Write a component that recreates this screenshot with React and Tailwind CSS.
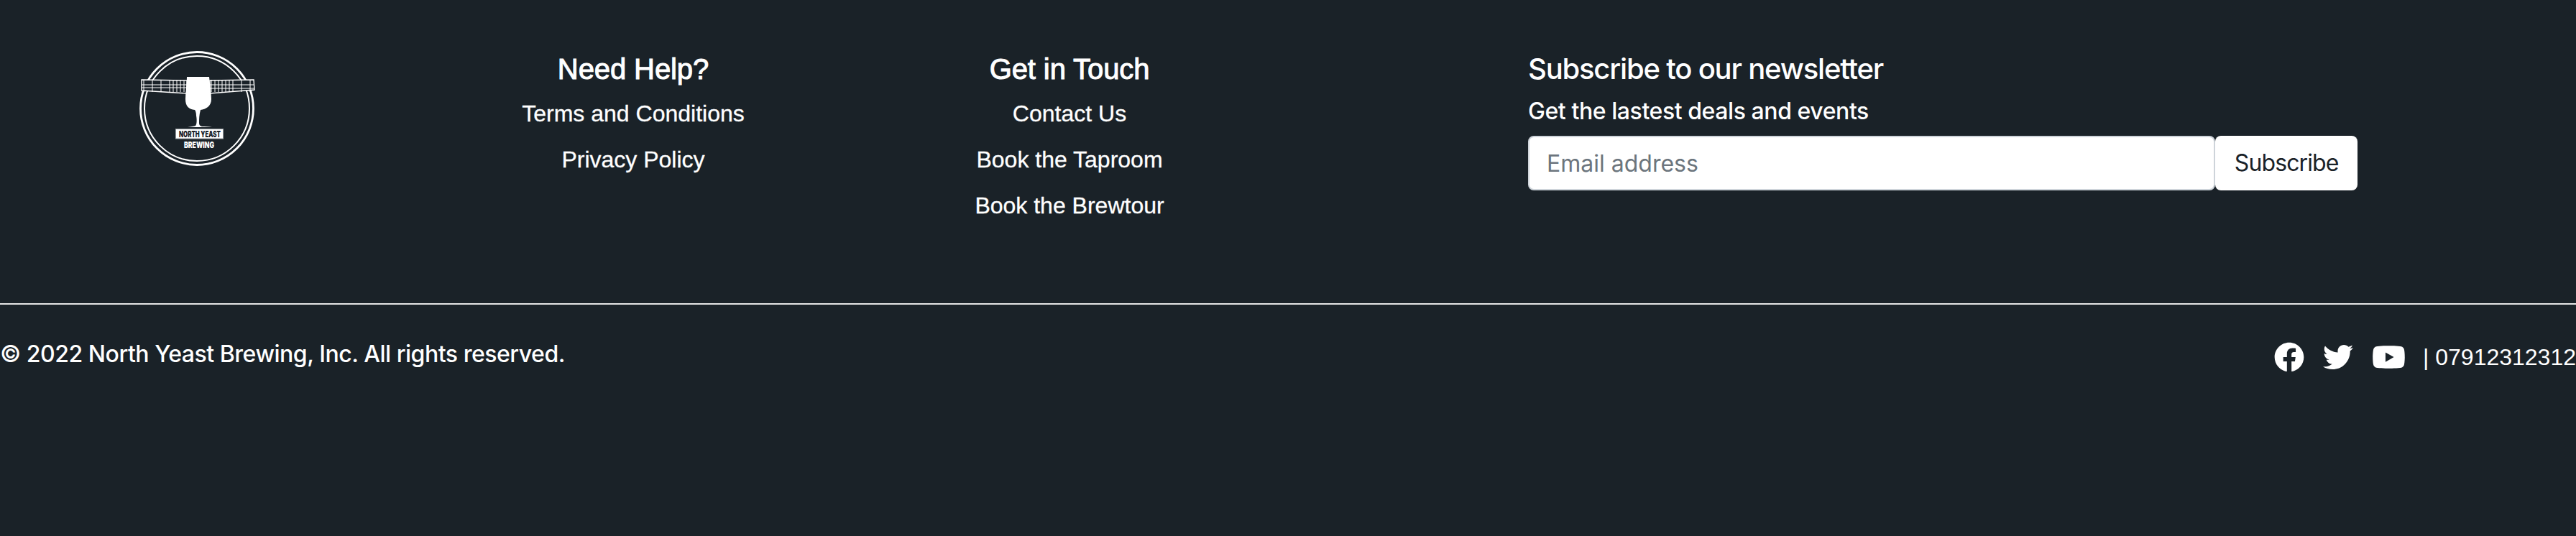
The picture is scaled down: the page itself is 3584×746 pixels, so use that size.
import { FaFacebook, FaTwitter, FaYoutube } from "react-icons/fa";

const inter = "font-['Inter',sans-serif]";
const arial = "font-['Liberation_Sans',sans-serif]";

function Logo() {
    const bars = [];
    for (let x = 200; x < 262; x += x < 235 ? 12 : 5) bars.push(x);
    for (let x = 294; x < 354; x += x < 320 ? 5 : 12) bars.push(x);

    return (
        <svg width="200" height="200" viewBox="170 50 200 200" className="block">
            <circle cx="274" cy="151" r="78.5" fill="none" stroke="white" strokeWidth="2.8" />
            <circle cx="274" cy="151" r="73" fill="none" stroke="white" strokeWidth="2" />
            {/* Wing bars */}
            <path d="M197 111 L260 112 L260 130 L197 126 Z" fill="#1a2228" stroke="white" strokeWidth="1.4" />
            <path d="M292 112 L353 111 L354 125 L292 130 Z" fill="#1a2228" stroke="white" strokeWidth="1.4" />
            <path d="M197 118 H260 M292 118 H354 M197 122 H260 M292 123 H354" stroke="white" strokeWidth="1" />
            {bars.map((x) => (
                <path key={x} d={`M${x} 111 V128`} stroke="white" strokeWidth="1" />
            ))}
            {/* Glass */}
            <path
                d="M260 107 H291 C292 118 294 128 294 138 C294 148 286 152 279 153 C277 160 277 166 277 171 C277 175 279 175 281 176 C286 176 290 176 295 177 H261 C266 176 270 176 272 175 C274 173 274 166 273 161 C273 157 272 154 271 153 C263 152 258 148 258 138 C258 128 260 118 260 107 Z"
                fill="white"
            />
            {/* Name plate */}
            <rect x="244.5" y="179.5" width="66" height="13.5" fill="white" stroke="#9a9fa3" strokeWidth="1" />
            <text x="278" y="191" textAnchor="middle" fontSize="12" fontWeight="900" fill="#1a2228" fontFamily="Inter, sans-serif" textLength="58" lengthAdjust="spacingAndGlyphs">
                NORTH YEAST
            </text>
            <text x="277" y="205.5" textAnchor="middle" fontSize="12" fontWeight="900" fill="white" fontFamily="Inter, sans-serif" textLength="42" lengthAdjust="spacingAndGlyphs">
                BREWING
            </text>
        </svg>
    );
}

function LinkColumn({ title, links, className }) {
    return (
        <div className={`flex flex-col items-center text-white ${className}`}>
            <h5 className={`${arial} mb-[14px] text-[40px] leading-[48px] font-medium tracking-[-0.1px] [-webkit-text-stroke:1px_white]`}>{title}</h5>
            {links.map((link) => (
                <a key={link} className={`${arial} mb-[16px] text-[32px] leading-[48px] text-white [-webkit-text-stroke:0.3px_white]`} href="#">
                    {link}
                </a>
            ))}
        </div>
    );
}

export default function App() {
    return (
        <footer className={`h-[746px] w-full overflow-hidden bg-[#1a2228] text-white ${inter}`}>
            <div className="flex h-[422px] items-start">
                <div className="flex w-[540px] shrink-0 justify-center pt-[50px]">
                    <Logo />
                </div>
                <LinkColumn
                    title="Need Help?"
                    links={["Terms and Conditions", "Privacy Policy"]}
                    className="w-[682px] shrink-0 pt-[72px]"
                />
                <LinkColumn
                    title="Get in Touch"
                    links={["Contact Us", "Book the Taproom", "Book the Brewtour"]}
                    className="w-[532px] shrink-0 pt-[72px]"
                />
                <div className="ml-[372px] w-[1154px] pt-[72px]">
                    <h5 className="mb-[11px] text-[40px] leading-[48px] font-medium tracking-[-1.2px]">Subscribe to our newsletter</h5>
                    <p className="mb-[10px] text-[32px] leading-[48px] font-medium tracking-[-0.43px]">Get the lastest deals and events</p>
                    <div className="flex">
                        <input
                            className="h-[76px] w-[958px] rounded-[8px] border-2 border-[#ced4da] bg-white px-[24px] text-[32px] text-[#212529] placeholder:text-[#6c757d]"
                            placeholder="Email address"
                        />
                        <button className="h-[76px] w-[198px] rounded-[8px] bg-white text-[32px] tracking-[-0.9px] text-[#1a2228]">
                            Subscribe
                        </button>
                    </div>
                </div>
            </div>
            <hr className="h-[2px] border-0 bg-[#e6e6e6]" />
            <div className="flex items-start justify-between pt-[45px]">
                <p className="text-[32px] leading-[48px] font-medium tracking-[-0.47px]">© 2022 North Yeast Brewing, Inc. All rights reserved.</p>
                <div className={`flex items-center pt-[4px] ${arial}`}>
                    <FaFacebook className="h-[42px] w-[42px]" />
                    <FaTwitter className="ml-[26px] h-[42px] w-[42px]" />
                    <FaYoutube className="ml-[26px] h-[42px] w-[47px]" />
                    <span className="ml-[24px] text-[32px] leading-[48px]">| 07912312312</span>
                </div>
            </div>
        </footer>
    );
}
